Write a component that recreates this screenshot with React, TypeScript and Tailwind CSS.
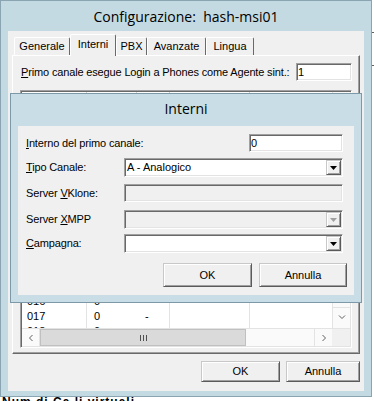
import React from "react";

const ms = "font-['Liberation_Sans',Arial,sans-serif]";
const seg = "font-['Open_Sans','Noto_Sans',sans-serif]";

const sunken =
  "border border-t-[#a0a0a0] border-l-[#a0a0a0] border-r-white border-b-white shadow-[inset_1px_1px_0_#696969,inset_-1px_-1px_0_#e3e3e3] p-[1px]";
const raised =
  "border border-t-[#c8c8c8] border-l-[#c8c8c8] border-r-[#5a5a5a] border-b-[#5a5a5a] shadow-[inset_1px_1px_0_#fff,inset_-1px_-1px_0_#a0a0a0] bg-[#f0f0f0]";

function Arrow({ color = "#000" }: { color?: string }) {
  return (
    <svg width="7" height="4" viewBox="0 0 7 4">
      <path d="M0 0h7L3.5 4z" fill={color} />
    </svg>
  );
}

function Combo({ value = "", disabled = false, className = "" }: { value?: string; disabled?: boolean; className?: string }) {
  return (
    <div className={`${sunken} ${disabled ? "bg-[#f0f0f0]" : "bg-white"} flex w-[219px] ${className}`}>
      <span className="flex-1 pl-[1px] text-[11px] leading-[15px]">{value}</span>
      <div className={`${raised} flex w-[15px] items-center justify-center`}>
        <Arrow color={disabled ? "#a0a0a0" : "#000"} />
      </div>
    </div>
  );
}

function Btn({ children, className = "" }: { children: React.ReactNode; className?: string }) {
  return <div className={`${raised} flex items-center justify-center text-[11px] ${className}`}>{children}</div>;
}

function Tab({ label, w, active = false }: { label: string; w: string; active?: boolean }) {
  return (
    <div
      className={`flex items-center justify-center rounded-t-[2px] border-l border-t border-r border-l-white border-t-white border-r-[#696969] bg-[#f0f0f0] text-[11px] ${w} ${
        active ? "relative z-10 -mb-[1px] h-[22px] pb-[2px]" : "h-[18px]"
      }`}
    >
      {label}
    </div>
  );
}

function Chev({ d }: { d: string }) {
  return (
    <svg width="8" height="8" viewBox="0 0 8 8">
      <path d={d} fill="none" stroke="#606060" strokeWidth="1" />
    </svg>
  );
}

const rows = ["012", "013", "014", "015", "016", "017", "018"];

function ListView() {
  return (
    <div className={`${sunken} ml-[7px] mt-[9px] flex h-[258px] w-[332px] flex-col bg-white`}>
      <div className="flex flex-1 overflow-hidden">
        <div className="flex w-[310px] flex-col">
          <div className="flex h-[20px] border-b border-[#e3e3e3] text-[11px]">
            <div className="w-[65px] border-r border-[#d5d5d5]" />
            <div className="w-[50px] border-r border-[#d5d5d5]" />
            <div className="w-[33px] border-r border-[#d5d5d5]" />
            <div className="w-[80px] border-r border-[#d5d5d5]" />
            <div className="flex-1" />
          </div>
          <div className="flex flex-1 flex-col justify-end overflow-hidden">
            {rows.map((r, i) => (
              <div key={r} className={`flex h-[15px] shrink-0 text-[11px] leading-[15px] ${i === rows.length - 1 ? "-mb-[11px]" : ""}`}>
                <div className="w-[65px] border-r border-[#e3e3e3] pl-[5px]">{r}</div>
                <div className="w-[50px] pl-[7px]">0</div>
                <div className="w-[33px] border-r border-[#e3e3e3] pl-[8px]">-</div>
                <div className="w-[80px] border-r border-[#e3e3e3]" />
                <div className="flex-1" />
              </div>
            ))}
          </div>
        </div>
        <div className="flex w-[18px] flex-col border-l border-[#e3e3e3] bg-[#fafafa]">
          <div className="flex-1" />
          <div className="mb-[3px] flex h-[18px] items-center justify-center border-t border-[#e3e3e3]">
            <Chev d="M1 2.5l3 3 3-3" />
          </div>
        </div>
      </div>
      <div className="flex h-[18px] border-t border-[#e3e3e3]">
        <div className="flex w-[18px] items-center justify-center border-r border-[#e3e3e3] bg-[#fafafa]">
          <Chev d="M5.5 1l-3 3 3 3" />
        </div>
        <div className="flex w-[206px] items-center justify-center border border-[#c0c0c0] bg-[#dadada]">
          <div className="flex gap-[2px]">
            <div className="h-[6px] w-[1px] bg-[#505050]" />
            <div className="h-[6px] w-[1px] bg-[#505050]" />
            <div className="h-[6px] w-[1px] bg-[#505050]" />
          </div>
        </div>
        <div className="flex-1 bg-[#fafafa]" />
        <div className="flex w-[18px] items-center justify-center border-l border-[#e3e3e3] bg-[#fafafa]">
          <Chev d="M2.5 1l3 3-3 3" />
        </div>
        <div className="w-[18px] bg-[#f0f0f0]" />
      </div>
    </div>
  );
}

export default function App() {
  return (
    <div className={`relative h-[401px] w-[374px] overflow-hidden bg-white text-black ${ms}`}>
      {/* main window */}
      <div className="flex h-[397px] w-[372px] flex-col border border-[#8aa4b1] bg-[#c4dae2] px-[7px] pb-[5px]">
        <div className={`flex h-[30px] items-center justify-center text-[14px] ${seg}`}>Configurazione:&nbsp; hash-msi01</div>
        <div className="h-[360px] w-[356px] bg-[#f0f0f0] pl-[4px] pt-[3px]">
          <div className="flex h-[21px] items-end pl-[2px]">
            <Tab label="Generale" w="w-[56px]" />
            <Tab label="Interni" w="w-[46px]" active />
            <Tab label="PBX" w="w-[31px]" />
            <Tab label="Avanzate" w="w-[59px]" />
            <Tab label="Lingua" w="w-[48px]" />
          </div>
          <div className="h-[299px] w-[348px] border-l border-t border-r border-b border-l-white border-t-white border-r-[#696969] border-b-[#696969] shadow-[inset_-1px_-1px_0_#a0a0a0]">
            <div className="flex items-center pl-[8px] pr-[7px] pt-[7px]">
              <span className="text-[11px] tracking-[-0.15px]">
                <u>P</u>rimo canale esegue Login a Phones come Agente sint.:
              </span>
              <div className={`${sunken} ml-auto h-[18px] w-[56px] bg-white pl-[1px] text-[11px] leading-[14px]`}>1</div>
            </div>
            <ListView />
          </div>
          <div className="mt-[7px] flex w-[348px] justify-end gap-[6px]">
            <Btn className="h-[21px] w-[79px]">OK</Btn>
            <Btn className="h-[21px] w-[74px]">Annulla</Btn>
          </div>
        </div>
      </div>

      {/* edge of window behind */}
      <div className="absolute left-[372px] top-[32px] h-[1px] w-[2px] bg-[#606060]" />
      <div className="absolute left-[372px] top-[65px] h-[1px] w-[2px] bg-[#606060]" />
      <div className="absolute left-[2px] top-[396px] text-[12px] font-bold leading-[12px] tracking-[1px]">Num di Ca li virtuali</div>

      {/* modal dialog */}
      <div className="absolute left-[10px] top-[93px] flex h-[210px] w-[352px] flex-col border border-[#7d98a7] bg-[#c8dde5] px-[7px] pb-[7px]">
        <div className={`flex h-[32px] items-center justify-center pb-[3px] text-[14px] ${seg}`}>Interni</div>
        <div className="flex h-[169px] w-[336px] flex-col bg-[#f0f0f0] pl-[8px] pr-[11px] pt-[8px] text-[11px]">
          <div className="flex h-[18px] items-center">
            <span className="tracking-[-0.15px]">
              <u>I</u>nterno del primo canale:
            </span>
            <div className={`${sunken} ml-auto h-[18px] w-[94px] bg-white pl-[1px] leading-[14px]`}>0</div>
          </div>
          <div className="mt-[6px] flex h-[19px] items-center">
            <span className="w-[98px] tracking-[-0.15px]">
              <u>T</u>ipo Canale:
            </span>
            <Combo value="A - Analogico" className="h-[19px]" />
          </div>
          <div className="mt-[7px] flex h-[18px] items-center">
            <span className="w-[98px] tracking-[-0.15px]">
              Server <u>V</u>Klone:
            </span>
            <div className={`${sunken} h-[18px] w-[219px] bg-[#f0f0f0]`} />
          </div>
          <div className="mt-[8px] flex h-[19px] items-center">
            <span className="w-[98px] tracking-[-0.15px]">
              Server <u>X</u>MPP
            </span>
            <Combo disabled className="h-[19px]" />
          </div>
          <div className="mt-[5px] flex h-[19px] items-center">
            <span className="w-[98px] tracking-[-0.15px]">
              <u>C</u>ampagna:
            </span>
            <Combo className="h-[19px]" />
          </div>
          <div className="-mr-[4px] mt-[10px] flex justify-end gap-[7px]">
            <Btn className="h-[24px] w-[89px]">OK</Btn>
            <Btn className="h-[24px] w-[88px]">Annulla</Btn>
          </div>
        </div>
      </div>
    </div>
  );
}
